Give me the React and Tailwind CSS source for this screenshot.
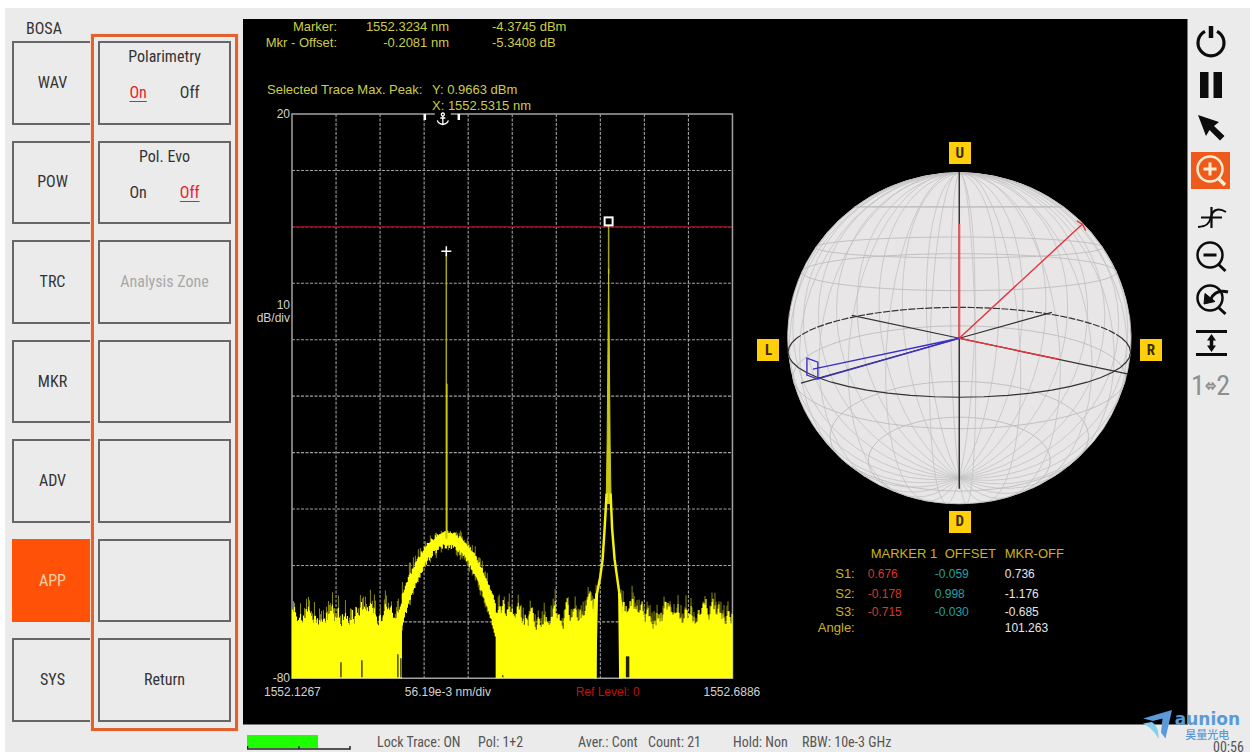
import React, { useState } from "react";
import clsx from "clsx";

const SECTIONS = ["WAV", "POW", "TRC", "MKR", "ADV", "APP", "SYS"];

const STOKES = [
  { name: "S1:", marker: "0.676", offset: "-0.059", diff: "0.736", line: "h-5" },
  { name: "S2:", marker: "-0.178", offset: "0.998", diff: "-1.176", line: "h-5" },
  { name: "S3:", marker: "-0.715", offset: "-0.030", diff: "-0.685", line: "h-4" },
  { name: "Angle:", marker: "", offset: "", diff: "101.263", line: "h-4" },
];

/* ---------- spectrum trace ---------- */

const PLOT_W = 441;
const PLOT_H = 565;

function makeRandom(seed) {
  let s = seed;
  return () => {
    s = (s * 1664525 + 1013904223) % 4294967296;
    return s / 4294967296;
  };
}

function buildTrace() {
  const rnd = makeRandom(77);
  let bright = "";
  let dim = "";
  let level = 0;
  for (let x = 0; x < PLOT_W; x++) {
    const px = x + 0.5;
    level = level * 0.65 + (rnd() - 0.5) * 17;
    const arch = 426 + 73 * ((x - 155) / 49) ** 2;
    const shoulder = 30 * Math.exp(-Math.abs(x - 317) / 11);
    let floor = 500 + level - shoulder;

    if (x >= 305 && x < 328) continue;

    if (x >= 110 && x < 204) {
      const edge = Math.abs(x - 155) / 49;
      const top = arch - 5 - rnd() * 4;
      const bottom = arch + 4 + rnd() * 5 + edge * edge * 20;
      bright += `M${px} ${top.toFixed(1)}V${bottom.toFixed(1)}`;
      if (rnd() > 0.7) {
        dim += `M${px} ${(top - 2 - edge * 14 * rnd()).toFixed(1)}V${(bottom + 5).toFixed(1)}`;
      }
      continue;
    }

    floor = Math.min(floor, Math.max(arch, 440));
    bright += `M${px} ${floor.toFixed(1)}V${PLOT_H}`;
    if (rnd() > 0.5) {
      dim += `M${px} ${(floor - 2 - rnd() * 12).toFixed(1)}V${floor.toFixed(1)}`;
    }
  }
  return { bright, dim };
}

const TRACE = buildTrace();

function SpectrumPlot() {
  const steps = [1, 2, 3, 4, 5, 6, 7, 8, 9];
  return (
    <svg
      viewBox={`0 0 ${PLOT_W} ${PLOT_H}`}
      className="block h-auto w-full overflow-visible"
      aria-label="Optical spectrum"
    >
      <g stroke="#a2a2a2" strokeWidth="1.1" strokeDasharray="3 1.5">
        {steps.map((i) => (
          <path key={`v${i}`} d={`M${i * 44.1} 0V${PLOT_H}`} />
        ))}
        {steps.map((i) => (
          <path key={`h${i}`} d={`M0 ${i * 56.5}H${PLOT_W}`} />
        ))}
      </g>
      <path d={`M0 113H${PLOT_W}`} stroke="#7d1019" strokeWidth="1.5" />
      <path d={`M143 0H0V${PLOT_H}H${PLOT_W}V0H159`} fill="none" stroke="#a3a3a3" strokeWidth="1.5" />

      <path d={TRACE.dim} stroke="#8d8d08" strokeWidth="1" />
      <path d={TRACE.bright} stroke="#ffff0a" strokeWidth="1.2" />

      {/* narrow line on top of the wide lobe */}
      <path d="M154.5 140V425" stroke="#a5a51c" strokeWidth="1.5" />
      <path d="M155 270V425" stroke="#d0d010" strokeWidth="1.5" />

      {/* laser peak */}
      <path d="M317 112V160" stroke="#a5a51c" strokeWidth="1.5" />
      <path d="M317 155L315.5 330L314.5 390H319.5L318.5 330Z" fill="#c8c814" stroke="#c8c814" />
      <path
        d="M315 380L313 415L311 446L308.5 464L305 482L302 500M319 380L320.5 415L323 446L325.5 464L328 482L331 500"
        fill="none"
        stroke="#f2f20c"
        strokeWidth="2.5"
      />
      <path d="M305 480L303 565M328 480L329 565" stroke="#ffff0a" strokeWidth="3" />

      {/* drop-outs in the noise floor */}
      <path d="M49 549V564M70 547V564M106 541V564M109 545V564M211 562V564" stroke="#4a4a00" strokeWidth="1.5" />
      <path d="M336 543V564" stroke="#222200" strokeWidth="3.5" />

      <path d="M133 0V6M167 0V6" stroke="#fff" strokeWidth="2.5" />
      <g fill="none" stroke="#fff" strokeWidth="1.3">
        <circle cx="151" cy="0.5" r="1.5" />
        <path d="M151 2V10M148.5 4H153.5M145.5 6.5C146 9 148 10 151 10.5C154 10 156 9 156.5 6.5" />
      </g>
      <path d="M149.5 137.5H159.5M154.5 132.5V142.5" stroke="#fff" strokeWidth="1.5" />
      <rect x="313" y="103.5" width="8" height="8" fill="#000" stroke="#fff" strokeWidth="2" />
    </svg>
  );
}

/* ---------- Poincaré sphere ---------- */

const TILT = (15 * Math.PI) / 180;

function project(lat, lon) {
  const a = (lat * Math.PI) / 180;
  const b = (lon * Math.PI) / 180;
  const z = Math.sin(a);
  const x = Math.cos(a) * Math.sin(b);
  const w = Math.cos(a) * Math.cos(b);
  const scale = 488 / (3.1 - (z * Math.sin(TILT) + w * Math.cos(TILT)));
  const u = x * scale * 1.038;
  const v = -(z * Math.cos(TILT) - w * Math.sin(TILT)) * scale;
  return `${u.toFixed(1)} ${v.toFixed(1)}`;
}

function parallel(lat, from = 0, to = 360) {
  const pts = [];
  for (let lon = from; lon <= to; lon += 6) pts.push(project(lat, lon));
  return "M" + pts.join("L");
}

function meridian(lon) {
  const pts = [];
  for (let lat = -90; lat <= 90; lat += 6) pts.push(project(lat, lon));
  return "M" + pts.join("L");
}

const MERIDIANS = Array.from({ length: 32 }, (_, i) => meridian(i * 11.25 + 4)).join("");
const PARALLELS = [54, 36, 27, -9, -36, -54].map((lat) => parallel(lat)).join("");

function PoincareSphere() {
  return (
    <svg viewBox="-173 -167 346 334" className="block h-auto min-w-0 flex-1" aria-label="Poincaré sphere">
      <ellipse rx="172.5" ry="166.5" fill="#e8e6e6" />
      <path d={MERIDIANS} fill="none" stroke="#c2c2c2" strokeWidth="0.8" />
      <path d={PARALLELS} fill="none" stroke="#bdbdbd" strokeWidth="0.9" />
      <path d={parallel(0, -90, 90)} fill="none" stroke="#333" strokeWidth="1.2" />
      <path d={parallel(0, 90, 270)} fill="none" stroke="#333" strokeWidth="1.2" strokeDasharray="7 1.5" />
      <path d="M0 -167V151" stroke="#333" strokeWidth="1.5" />
      <path d="M-108 -23L0 0L170 36M93 -26L0 0L-159 45" fill="none" stroke="#333" strokeWidth="1.2" />
      <path d="M0 -115V0" stroke="#f0525a" strokeWidth="2" />
      <path d="M0 0L124 -115M0 0L100 21" fill="none" stroke="#e8323c" strokeWidth="1.4" />
      <path d="M118 -118L124 -114L127 -108" fill="none" stroke="#e8323c" strokeWidth="1.4" />
      <path
        d="M-147 31L0 0L-143 41M-153 20L-142 24V41L-153 37Z"
        fill="none"
        stroke="#3b30c8"
        strokeWidth="1.4"
      />
    </svg>
  );
}

function PoleTag({ children, className }) {
  return (
    <span
      className={clsx(
        "flex size-[22px] shrink-0 items-center justify-center bg-[#ffcf0a] font-['Liberation_Sans_Narrow','Roboto_Condensed','Open_Sans',sans-serif] text-[15px] leading-none font-bold text-[#3a2c00]",
        className
      )}
    >
      {children}
    </span>
  );
}

function StokesTable() {
  return (
    <table className="mx-auto mt-[11px] w-[286px] table-fixed text-left text-xs leading-4 text-[#e6e6e6]">
      <colgroup>
        <col className="w-[51px]" />
        <col className="w-[67px]" />
        <col className="w-[70px]" />
        <col className="w-[98px]" />
      </colgroup>
      <thead>
        <tr className="h-5 text-[13px] whitespace-nowrap text-[#c9b41e]">
          <td className="p-0" />
          <th className="p-0 pl-[3px] font-normal">MARKER 1</th>
          <th className="p-0 pl-[10px] font-normal">OFFSET</th>
          <th className="p-0 font-normal">MKR-OFF</th>
        </tr>
      </thead>
      <tbody>
        {STOKES.map((row) => (
          <tr key={row.name} className={row.line}>
            <th className="p-0 pr-[13px] text-right text-[13px] font-normal text-[#c9b41e]">{row.name}</th>
            <td className="p-0 text-[#d8382c]">{row.marker}</td>
            <td className="p-0 text-[#21a3a3]">{row.offset}</td>
            <td className="p-0">{row.diff}</td>
          </tr>
        ))}
      </tbody>
    </table>
  );
}

/* ---------- display ---------- */

function Display() {
  return (
    <section className="grid flex-1 grid-cols-[minmax(0,490fr)_minmax(0,455fr)] border-r border-b border-[#777] bg-black font-['Liberation_Sans',sans-serif]">
      <div>
        <table className="text-[13px] leading-4 whitespace-nowrap text-[#cdcd45]">
          <tbody>
            <tr>
              <th className="w-[94px] p-0 text-right font-normal">Marker:</th>
              <td className="w-[112px] p-0 text-right">1552.3234 nm</td>
              <td className="p-0 pl-[43px]">-4.3745 dBm</td>
            </tr>
            <tr>
              <th className="p-0 text-right font-normal">Mkr - Offset:</th>
              <td className="p-0 text-right">-0.2081 nm</td>
              <td className="p-0 pl-[43px]">-5.3408 dB</td>
            </tr>
          </tbody>
        </table>

        <div className="mt-[31px] flex pl-6 text-[13px] leading-4 text-[#cdcd45]">
          <span className="w-[165px]">Selected Trace Max. Peak:</span>
          <div>
            <p>Y: 0.9663 dBm</p>
            <p>X: 1552.5315 nm</p>
          </div>
        </div>

        <div className="grid grid-cols-[49px_minmax(0,1fr)] text-xs text-[#d2d2d2]">
          <div className="-my-2 flex flex-col pr-0.5 text-right leading-4">
            <span>20</span>
            <span className="flex-[20]" />
            <span className="leading-[13px]">
              10
              <br />
              dB/div
            </span>
            <span className="flex-[39]" />
            <span>-80</span>
          </div>
          <SpectrumPlot />
        </div>

        <div className="mt-1.5 -mr-7 ml-[21px] grid grid-cols-[141fr_171fr_128fr_57fr] text-xs leading-4 whitespace-nowrap text-[#d2d2d2]">
          <span>1552.1267</span>
          <span>56.19e-3 nm/div</span>
          <span className="text-[#c01010]">Ref Level: 0</span>
          <span>1552.6886</span>
        </div>
      </div>

      <div className="pt-[123px]">
        <PoleTag className="mx-auto mb-2">U</PoleTag>
        <div className="flex items-center gap-2 px-[25px]">
          <PoleTag className="mt-6">L</PoleTag>
          <PoincareSphere />
          <PoleTag className="mt-6">R</PoleTag>
        </div>
        <PoleTag className="mx-auto mt-1.5">D</PoleTag>
        <StokesTable />
      </div>
    </section>
  );
}

function StatusBar() {
  return (
    <footer className="flex h-[27px] items-center pt-1.5 pl-1 text-[14px] leading-4 whitespace-nowrap text-[#555]">
      <svg width="104" height="20" viewBox="0 0 104 20" className="mt-0.5 shrink-0" aria-hidden="true">
        <rect width="71" height="13" y="2" fill="#1eff00" />
        <path d="M0.5 13V16H103V13M52 13V16" fill="none" stroke="#222" strokeWidth="1.5" />
      </svg>
      <span className="ml-[26px] w-[101px]">Lock Trace: ON</span>
      <span className="w-[100px]">Pol: 1+2</span>
      <span className="w-[70px]">Aver.: Cont</span>
      <span className="w-[85px]">Count: 21</span>
      <span className="w-[69px]">Hold: Non</span>
      <span>RBW: 10e-3 GHz</span>
    </footer>
  );
}

/* ---------- side menus ---------- */

function SectionNav({ active, onSelect }) {
  return (
    <nav className="flex w-[86px] flex-col pb-[30px] pl-[7px]">
      <h1 className="flex h-[33px] items-end pl-3.5 text-base leading-6">BOSA</h1>
      <div className="flex flex-1 flex-col gap-4">
        {SECTIONS.map((name) => (
          <button
            key={name}
            onClick={() => onSelect(name)}
            className={clsx(
              "flex-1 border-2 border-r-0 text-base",
              name === active
                ? "border-[#ff5208] bg-[#ff5208] text-[#ffd0a8]"
                : "border-[#666668] text-[#333]"
            )}
          >
            {name}
          </button>
        ))}
      </div>
    </nav>
  );
}

function Toggle({ label, value, onChange }) {
  return (
    <div role="group" aria-label={label} className="flex flex-1 flex-col items-center gap-3 border-2 border-[#666668] leading-6">
      <span className="mt-0.5">{label}</span>
      <div className="flex gap-[33px]">
        {["On", "Off"].map((option) => (
          <button
            key={option}
            onClick={() => onChange(option)}
            className={clsx(value === option && "text-[#e8202c] underline underline-offset-3")}
          >
            {option}
          </button>
        ))}
      </div>
    </div>
  );
}

function SoftKeys() {
  const [polarimetry, setPolarimetry] = useState("On");
  const [polEvo, setPolEvo] = useState("Off");
  const key = "flex-1 border-2 border-[#666668]";
  return (
    <div className="mt-[26px] mb-[21px] flex w-[147px] flex-col gap-4 border-3 border-[#e0622f] bg-[#ebebeb] px-1 pt-1 pb-1.5 text-base text-[#333] ring-1 ring-[#f7dccb]">
      <Toggle label="Polarimetry" value={polarimetry} onChange={setPolarimetry} />
      <Toggle label="Pol. Evo" value={polEvo} onChange={setPolEvo} />
      <button className={clsx(key, "text-[#a9a9a9]")} disabled>
        Analysis Zone
      </button>
      <button className={key} aria-label="Empty" />
      <button className={key} aria-label="Empty" />
      <button className={key} aria-label="Empty" />
      <button className={key}>Return</button>
    </div>
  );
}

/* ---------- tool column ---------- */

function Glyph({ children }) {
  return (
    <svg
      width="36"
      height="36"
      viewBox="0 0 36 36"
      fill="none"
      stroke="currentColor"
      strokeWidth="2.5"
      aria-hidden="true"
    >
      {children}
    </svg>
  );
}

const TOOLS = [
  {
    name: "Power",
    glyph: (
      <>
        <path d="M12 7.3A13 13 0 1 0 24 7.3" strokeWidth="3.2" />
        <path d="M18 2V14" strokeWidth="4.5" />
      </>
    ),
  },
  {
    name: "Pause",
    glyph: <path d="M7 5H15.5V31H7ZM20.5 5H29V31H20.5Z" fill="currentColor" stroke="none" />,
  },
  {
    name: "Pointer",
    glyph: <path d="M5 5L26 12L21 16L31.5 26L27 30.5L16.5 20L13 26Z" fill="currentColor" stroke="none" />,
  },
  {
    name: "Zoom in",
    active: true,
    glyph: (
      <>
        <circle cx="17" cy="16" r="12.5" />
        <path d="M25 25L32 32" strokeWidth="3.5" />
        <path d="M17 9.5V22.5M10.5 16H23.5" strokeWidth="3" />
      </>
    ),
  },
  {
    name: "Peak",
    glyph: (
      <>
        <path d="M5 31C13 31 16.500 28 18 21C19.5 14 25 11 33 16" strokeWidth="2" />
        <path d="M18.5 11V32M8 21.5H29" strokeWidth="2.2" />
      </>
    ),
  },
  {
    name: "Zoom out",
    glyph: (
      <>
        <circle cx="17" cy="16" r="12.5" />
        <path d="M25 25L32.5 32" strokeWidth="3" />
        <path d="M10.5 16H23.5" strokeWidth="3" />
      </>
    ),
  },
  {
    name: "Zoom reset",
    glyph: (
      <>
        <circle cx="17" cy="16" r="12.5" />
        <path d="M25 25L32.5 32M18 17C21 10 27 8 35 10" strokeWidth="3" />
        <path d="M11 22L12 11.5L22 19.5Z" fill="currentColor" strokeWidth="1" />
      </>
    ),
  },
  {
    name: "Fit height",
    glyph: (
      <>
        <path d="M3 6.5H34M3 29.5H34" strokeWidth="2.8" />
        <path d="M18.5 13V23" strokeWidth="3.5" />
        <path d="M18.5 9L23 15.5H14ZM18.5 27L23 20.5H14Z" fill="currentColor" stroke="none" />
      </>
    ),
  },
];

function ToolColumn() {
  return (
    <aside className="relative flex w-[62px] flex-col gap-1.5 pt-[15px] pl-[3px] text-[#0c0c0c]">
      {TOOLS.map((tool) => (
        <button
          key={tool.name}
          aria-label={tool.name}
          className={clsx(
            "flex h-[37px] w-[39px] items-center justify-center",
            tool.active && "bg-[#ee5a1c] text-[#ffecd0]"
          )}
        >
          <Glyph>{tool.glyph}</Glyph>
        </button>
      ))}
      <button className="flex h-[37px] w-[39px] items-center justify-center text-[28px] leading-none text-[#8f8f8f]">
        1
        <svg width="14" height="12" viewBox="0 0 14 12" fill="none" stroke="currentColor" strokeWidth="2" aria-label="to">
          <path d="M3 4.3H11M3 7.7H11M5.5 1.5L1.500 6L5.5 10.5M8.5 1.5L12.5 6L8.5 10.5" />
        </svg>
        2
      </button>
      <time className="mt-auto ml-[22px] text-sm leading-[10px] text-[#555]">00:56</time>
      <BrandMark />
    </aside>
  );
}

function BrandMark() {
  return (
    <div className="absolute right-2.5 bottom-3 flex gap-0.5 text-[#5b9ad8]">
      <svg width="30" height="30" viewBox="0 0 30 30" aria-hidden="true">
        <path d="M0 8.5L29 0L22.5 28.5L18 22.5L19.5 8.5L10 11Z" fill="#5b9ad8" />
        <path d="M0 13.5L9 12C14 16 16 21 15.5 29C12 22 7 17 0 13.5Z" fill="#82d0ea" />
      </svg>
      <div className="text-center">
        <p className="font-['DejaVu_Sans',sans-serif] text-[17px] leading-[19px] font-bold">aunion</p>
        <p className="font-['Noto_Sans_CJK_SC',sans-serif] text-[11px] leading-[11px] font-medium">昊量光电</p>
      </div>
    </div>
  );
}

export default function App() {
  const [section, setSection] = useState("APP");

  return (
    <div className="flex min-h-screen bg-white pt-2 pr-0.5 pl-[5px] font-['Liberation_Sans_Narrow','Roboto_Condensed','Open_Sans_Condensed','Open_Sans',sans-serif] text-[#333]">
      <div className="flex flex-1 bg-[#ebebeb]">
        <SectionNav active={section} onSelect={setSection} />
        <SoftKeys />
        <main className="ml-[5px] flex min-w-0 flex-1 flex-col pt-[11px]">
          <Display />
          <StatusBar />
        </main>
        <ToolColumn />
      </div>
    </div>
  );
}
